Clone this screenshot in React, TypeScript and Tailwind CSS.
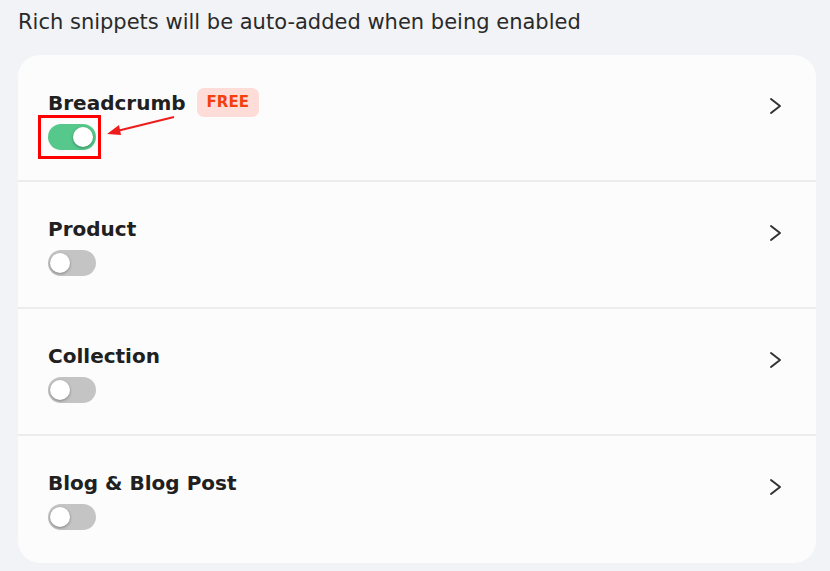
import React from "react";

const rows = [
  { title: "Breadcrumb", on: true, free: true },
  { title: "Product", on: false },
  { title: "Collection", on: false },
  { title: "Blog & Blog Post", on: false },
];

function Toggle({ on }: { on: boolean }) {
  return (
    <div
      className={`relative h-[26px] w-[48px] rounded-full ${on ? "bg-[#57c88b]" : "bg-[#c4c4c4]"}`}
    >
      <div
        className={`absolute top-[3px] h-[20px] w-[20px] rounded-full bg-white shadow-[0_1px_3px_rgba(0,0,0,0.35)] ${on ? "left-[25px]" : "left-[2px]"}`}
      />
    </div>
  );
}

function Chevron() {
  return (
    <svg width="16" height="20" viewBox="0 0 16 20" fill="none">
      <path d="M3 3 L12 10 L3 17" stroke="#333" strokeWidth="2" strokeLinecap="round" strokeLinejoin="round" />
    </svg>
  );
}

export default function App() {
  return (
    <div
      className="h-[571px] w-[830px] overflow-hidden bg-[#f1f3f6] text-[#1f1f1f]"
      style={{ fontFamily: "'DejaVu Sans', 'Noto Sans', sans-serif" }}
    >
      <div className="px-[18px] pt-[8px] text-[21px] leading-[28px] text-[#2a2a2a]">
        Rich snippets will be auto-added when being enabled
      </div>
      <div className="mx-[18px] mt-[19px] w-[798px] overflow-hidden rounded-[22px] bg-[#fcfcfc]">
        {rows.map((r, i) => (
          <div
            key={r.title}
            className={`flex h-[127px] items-start justify-between pl-[30px] pr-[32px] ${i < rows.length - 1 ? "border-b-2 border-[#ececec]" : ""}`}
          >
            <div className="pt-[33px]">
              <div className="flex items-center gap-[11px]">
                <span className="text-[20px] font-semibold leading-[28px] text-[#202020]">{r.title}</span>
                {r.free && (
                  <span className="rounded-[7px] bg-[#fedcd8] px-[10px] py-[2px] text-[15px] font-bold leading-[25px] text-[#f2400f]">
                    FREE
                  </span>
                )}
              </div>
              <div className="relative mt-[7px]">
                <Toggle on={r.on} />
                {r.free && (
                  <>
                    <div className="absolute left-[-10px] top-[-9px] h-[44px] w-[63px] border-[3px] border-[#f00]" />
                    <svg className="absolute left-[55px] top-[-10px]" width="75" height="30" viewBox="0 0 75 30">
                      <line x1="71" y1="3" x2="14" y2="17" stroke="#ee1c1c" strokeWidth="2.2" />
                      <polygon points="4,20 16,11 18,21" fill="#ee1c1c" />
                    </svg>
                  </>
                )}
              </div>
            </div>
            <div className="pt-[41px]">
              <Chevron />
            </div>
          </div>
        ))}
      </div>
    </div>
  );
}
